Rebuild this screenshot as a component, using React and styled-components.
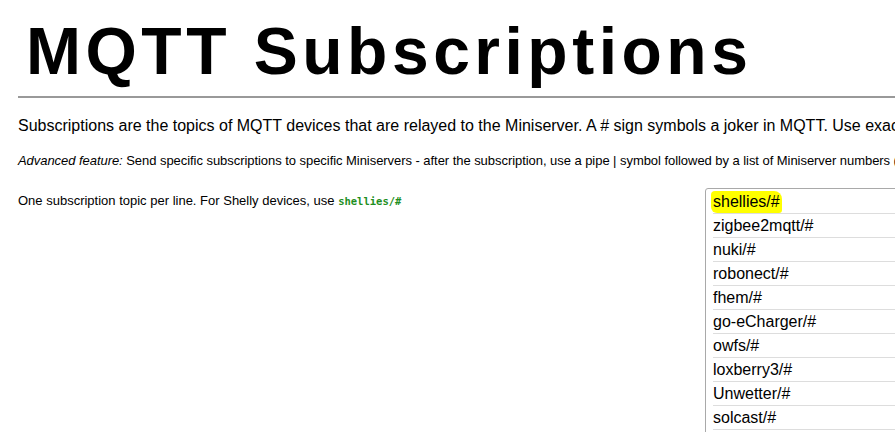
import React from "react";
import styled, { createGlobalStyle } from "styled-components";

const GlobalStyle = createGlobalStyle`
  html, body {
    margin: 0;
    padding: 0;
    background: #fff;
    overflow: hidden;
  }
  body {
    font-family: "Liberation Sans", Arial, sans-serif;
    color: #000;
  }
`;

const topics = [
  "shellies/#",
  "zigbee2mqtt/#",
  "nuki/#",
  "robonect/#",
  "fhem/#",
  "go-eCharger/#",
  "owfs/#",
  "loxberry3/#",
  "Unwetter/#",
  "solcast/#",
];

const Page = styled.div`
  width: 895px;
  height: 432px;
  overflow: hidden;
  padding: 0 0 0 18px;
  box-sizing: border-box;
`;

const Title = styled.h1`
  margin: 0;
  padding: 13px 0 0 8px;
  font-size: 66px;
  font-weight: bold;
  letter-spacing: 4.5px;
  line-height: 76px;
  white-space: nowrap;
`;

const Rule = styled.hr`
  margin: 7px 0 0 0;
  border: none;
  border-top: 2px solid #999;
  width: 1200px;
`;

const Intro = styled.p`
  margin: 18px 0 0 0;
  font-size: 16px;
  line-height: 20px;
  white-space: nowrap;
`;

const Advanced = styled.p`
  margin: 17px 0 0 0;
  font-size: 13px;
  letter-spacing: -0.05px;
  line-height: 16px;
  white-space: nowrap;

  em {
    font-style: italic;
  }
`;

const Settings = styled.div`
  display: flex;
  align-items: flex-start;
  margin-top: 19px;
`;

const Label = styled.div`
  width: 687px;
  flex-shrink: 0;
  font-size: 13px;
  padding-top: 5px;
  white-space: nowrap;
`;

const Code = styled.code`
  font-family: "DejaVu Sans Mono", monospace;
  font-size: 10.5px;
  font-weight: bold;
  color: #1f8f1f;
`;

const TopicBox = styled.div`
  width: 520px;
  flex-shrink: 0;
  border: 1px solid #a9a9a9;
  border-radius: 3px;
  padding: 1px 0 60px 7px;
  display: flex;
  flex-direction: column;
`;

const TopicRow = styled.div`
  height: 23px;
  border-bottom: 1px solid #ddd;
  font-size: 16px;
  line-height: 24px;
  white-space: nowrap;
`;

const Highlight = styled.span`
  background: ${(p) => (p.$on ? "#ffff00" : "transparent")};
  border-radius: 4px 8px 3px 6px;
  padding: 2px 2px 3px 2px;
  margin-left: -2px;
`;

export default function App() {
  return (
    <>
      <GlobalStyle />
      <Page>
        <Title>MQTT Subscriptions</Title>
        <Rule />
        <Intro>
          Subscriptions are the topics of MQTT devices that are relayed to the
          Miniserver. A # sign symbols a joker in MQTT. Use exactly the topic
          names your devices publish.
        </Intro>
        <Advanced>
          <em>Advanced feature:</em> Send specific subscriptions to specific
          Miniservers - after the subscription, use a pipe | symbol followed by
          a list of Miniserver numbers (for example 1,2).
        </Advanced>
        <Settings>
          <Label>
            One subscription topic per line. For Shelly devices, use{" "}
            <Code>shellies/#</Code>
          </Label>
          <TopicBox>
            {topics.map((t, i) => (
              <TopicRow key={t}>
                <Highlight $on={i === 0}>{t}</Highlight>
              </TopicRow>
            ))}
          </TopicBox>
        </Settings>
      </Page>
    </>
  );
}
